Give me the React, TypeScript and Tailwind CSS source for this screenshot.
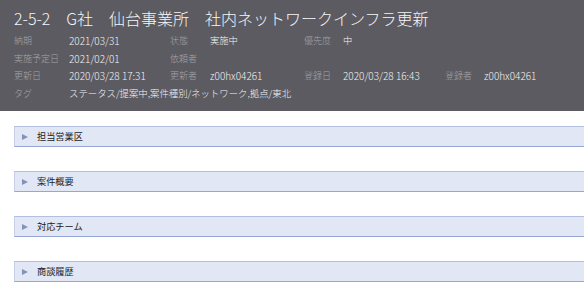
import React from "react";

const font = { fontFamily: '"Noto Sans CJK JP", "Noto Sans", sans-serif' };

function Label({ children }: { children?: React.ReactNode }) {
  return <div className="text-[#a3a3a9] whitespace-nowrap text-[9px] font-light">{children}</div>;
}
function Value({ children, className = "" }: { children?: React.ReactNode; className?: string }) {
  return <div className={"text-[#f4f4f6] whitespace-nowrap font-light " + className}>{children}</div>;
}

function Section({ title }: { title: string }) {
  return (
    <div className="ml-[14px] h-[21px] flex items-center bg-[#e1e7f5] border-t border-b border-l border-t-[#b2bfe0] border-b-[#94a7d6] border-l-[#c6cfe6]">
      <span className="ml-[7px] w-0 h-0 border-y-[3.5px] border-y-transparent border-l-[6px] border-l-[#8492b8]" />
      <span className="ml-[9px] text-[9.2px] text-[#222]">{title}</span>
    </div>
  );
}

export default function App() {
  return (
    <div style={font} className="w-[584px] h-[298px] bg-white overflow-hidden">
      <div className="bg-[#5b5b61] h-[111px] pl-[14px] pt-[6px]">
        <div className="text-[16px] leading-[24px] text-[#f6f6f8] whitespace-nowrap font-light">
          2-5-2　G社　仙台事業所　社内ネットワークインフラ更新
        </div>
        <div className="mt-[2px] grid grid-cols-[55px_101px_40px_94px_39px_102px_39px_auto] auto-rows-[17.5px] items-center text-[10px]">
          <Label>納期</Label>
          <Value>2021/03/31</Value>
          <Label>状態</Label>
          <Value className="text-[9.3px]">実施中</Value>
          <Label>優先度</Label>
          <Value className="text-[9.3px]">中</Value>
          <div />
          <div />

          <Label>実施予定日</Label>
          <Value>2021/02/01</Value>
          <Label>依頼者</Label>
          <Value />
          <div />
          <div />
          <div />
          <div />

          <Label>更新日</Label>
          <Value>2020/03/28 17:31</Value>
          <Label>更新者</Label>
          <Value>z00hx04261</Value>
          <Label>登録日</Label>
          <Value>2020/03/28 16:43</Value>
          <Label>登録者</Label>
          <Value>z00hx04261</Value>

          <Label>タグ</Label>
          <Value className="col-span-7 text-[9.4px]">ステータス/提案中,案件種別/ネットワーク,拠点/東北</Value>
        </div>
      </div>
      <div className="pt-[15px] flex flex-col gap-[24px]">
        <Section title="担当営業区" />
        <Section title="案件概要" />
        <Section title="対応チーム" />
        <Section title="商談履歴" />
      </div>
    </div>
  );
}
